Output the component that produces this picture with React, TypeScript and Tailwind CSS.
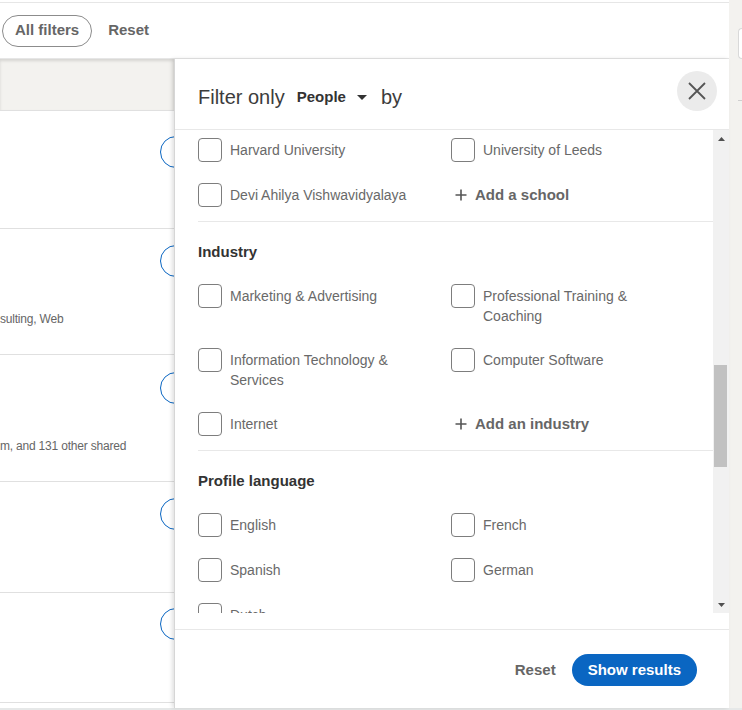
const box = "h-6 w-6 shrink-0 rounded-[4px] border border-[#7d7d7d] bg-white";
const label = "max-w-[200px] py-[2px] text-[14px] leading-5 text-[#696969]";
const heading = "mb-5 text-[15px] font-bold leading-6 text-[#333]";
const grid = "grid grid-cols-[253px_1fr] gap-y-[21px]";

const rows = [
  { h: "h-[118px]", pt: "pt-[25px]", text: "" },
  { h: "h-[126px]", pt: "pt-4", text: "sulting, Web" },
  { h: "h-[127px]", pt: "pt-[17px]", text: "m, and 131 other shared" },
  { h: "h-[111px]", pt: "pt-4", text: "" },
  { h: "h-[110px]", pt: "pt-[15px]", text: "" },
];

function Check({ name }: { name: string }) {
  return (
    <label className="flex cursor-pointer items-start gap-2">
      <span className={box} />
      <span className={label}>{name}</span>
    </label>
  );
}

function AddMore({ text }: { text: string }) {
  return (
    <button className="flex h-6 items-center gap-2 pl-1 text-[15px] font-bold text-[#666]">
      <svg width="12" height="12" viewBox="0 0 12 12" className="text-[#555]">
        <path d="M6 0.5v11M0.5 6h11" stroke="currentColor" strokeWidth="1.6" />
      </svg>
      {text}
    </button>
  );
}

function Scrollbar() {
  return (
    <div className="flex w-4 shrink-0 flex-col bg-[#f1f1f1]">
      <div className="flex h-[17px] items-center justify-center pt-px">
        <svg width="7" height="4" viewBox="0 0 7 4">
          <polygon points="0,4 3.5,0 7,4" fill="#505050" />
        </svg>
      </div>
      <div className="mt-[218px] ml-px h-[102px] w-[13px] bg-[#c1c1c1]" />
      <div className="flex-1" />
      <div className="flex h-[17px] items-center justify-center">
        <svg width="7" height="4" viewBox="0 0 7 4">
          <polygon points="0,0 7,0 3.5,4" fill="#505050" />
        </svg>
      </div>
    </div>
  );
}

export default function App() {
  return (
    <div className="flex h-[710px] w-[742px] flex-col overflow-hidden bg-white font-['Liberation_Sans',Arial,sans-serif]">
      <div className="flex h-[708px]">
        <div className="flex w-[729px] shrink-0 flex-col">
          <div className="h-[2px]" />
          <div className="flex h-[57px] shrink-0 items-center border-y border-[#e6e6e6] pl-[2px]">
            <button className="h-8 rounded-full border border-[#8c8c8c] px-3 text-[15px] font-bold text-[#666]">
              All filters
            </button>
            <button className="ml-4 text-[15px] font-bold text-[#666]">Reset</button>
          </div>

          <div className="flex flex-1">
            <div className="w-[174px] shrink-0 overflow-hidden">
              <div className="h-[52px] border-b border-[#e0e0e0] bg-[#f3f2ef] shadow-[inset_0_2px_3px_rgba(0,0,0,0.12)]" />
              {rows.map((r, i) => (
                <div key={i} className={`${r.h} ${r.pt} flex flex-col border-b border-[#e0e0e0]`}>
                  <div className="ml-[160px] h-8 w-20 shrink-0 rounded-full border border-[#0a66c2]" />
                  {r.text && (
                    <div className="mt-[34px] whitespace-nowrap text-[12px] leading-4 tracking-[-0.2px] text-[#666]">
                      {r.text}
                    </div>
                  )}
                </div>
              ))}
            </div>

            <div className="relative z-10 flex flex-1 flex-col border-l border-[#d6d6d6] bg-white shadow-[-2px_0_4px_rgba(0,0,0,0.12)]">
              <div className="flex h-[71px] shrink-0 items-start justify-between border-b border-[#e8e8e8] pt-3 pr-3 pl-[23px]">
                <div className="mt-3 flex items-center text-[#3c3c3c]">
                  <span className="text-[20px] leading-7">Filter only</span>
                  <button className="ml-3 flex items-center text-[15px] font-bold text-[#333]">
                    People
                    <svg width="10" height="5" viewBox="0 0 10 5" className="ml-[11px]">
                      <polygon points="0,0 10,0 5,5" fill="#333" />
                    </svg>
                  </button>
                  <span className="ml-[14px] text-[20px] leading-7">by</span>
                </div>
                <button
                  aria-label="Dismiss"
                  className="flex h-10 w-10 items-center justify-center rounded-full bg-[#ebebeb] text-[#555]"
                >
                  <svg width="24" height="24" viewBox="0 0 24 24">
                    <path d="M4 4l16 16M20 4L4 20" stroke="currentColor" strokeWidth="1.8" />
                  </svg>
                </button>
              </div>

              <div className="flex h-[483px] shrink-0">
                <div className="flex-1 overflow-hidden pt-2 pl-[23px]">
                  <section className="border-b border-[#e8e8e8] pb-[14px]">
                    <div className={grid}>
                      <Check name="Harvard University" />
                      <Check name="University of Leeds" />
                      <Check name="Devi Ahilya Vishwavidyalaya" />
                      <AddMore text="Add a school" />
                    </div>
                  </section>
                  <section className="border-b border-[#e8e8e8] pt-[18px] pb-[14px]">
                    <h3 className={heading}>Industry</h3>
                    <div className="grid grid-cols-[253px_1fr] gap-y-5">
                      <Check name="Marketing & Advertising" />
                      <Check name="Professional Training & Coaching" />
                      <Check name="Information Technology & Services" />
                      <Check name="Computer Software" />
                      <Check name="Internet" />
                      <AddMore text="Add an industry" />
                    </div>
                  </section>
                  <section className="pt-[18px]">
                    <h3 className={heading}>Profile language</h3>
                    <div className={grid}>
                      <Check name="English" />
                      <Check name="French" />
                      <Check name="Spanish" />
                      <Check name="German" />
                      <Check name="Dutch" />
                    </div>
                  </section>
                </div>
                <Scrollbar />
              </div>

              <div className="h-4 shrink-0" />
              <div className="flex flex-1 items-start justify-end gap-4 border-t border-[#e8e8e8] pt-6 pr-8">
                <button className="text-[15px] leading-8 font-bold text-[#666]">Reset</button>
                <button className="h-8 rounded-full bg-[#0a66c2] px-4 text-[15px] font-bold text-white">
                  Show results
                </button>
              </div>
            </div>
          </div>
        </div>

        <div className="flex flex-1 flex-col bg-[#f3f2ef] pt-[28px] pl-[9px]">
          <div className="h-[31px] rounded-l-md border border-r-0 border-[#d9d9d9] bg-white" />
          <div className="mt-[41px] h-px bg-[#cfcfcf]" />
        </div>
      </div>
      <div className="h-[2px] bg-[#e6e8e8]" />
    </div>
  );
}
